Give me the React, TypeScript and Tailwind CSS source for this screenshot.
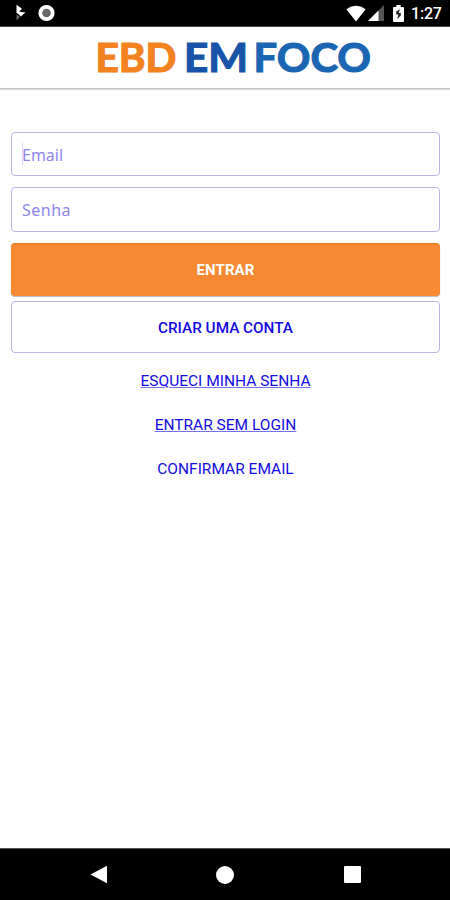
import React from "react";

const StatusBar = () => {
  return (
    <div className="flex h-[27px] shrink-0 items-center justify-between border-b border-[#444] bg-black pl-4 pr-2">
      <div className="flex items-center gap-3">
        <svg className="h-[18px] w-[10px]" viewBox="0 0 10 18">
          <path d="M0.5 0.8L6 4.8L3.2 7.5L7 8.2H9.5L5 12.5L2 9.8L0.5 9Z" fill="#fff" />
          <path d="M0.5 10.5L4 13L0.5 16.5Z" fill="#666" />
        </svg>
        <svg className="h-[18px] w-[17px]" viewBox="0 0 17 18">
          <circle cx="8.5" cy="9" r="6.2" fill="#666" stroke="#fff" strokeWidth="3.8" />
        </svg>
      </div>
      <div className="flex items-center">
        <svg className="h-[17px] w-5" viewBox="0 0 20 17">
          <path d="M0.3 4.2Q10 -2.6 19.7 4.2L10 16.5Z" fill="#fff" />
        </svg>
        <svg className="ml-[2px] h-4 w-4" viewBox="0 0 16 16">
          <path d="M0 16L16 0V16Z" fill="#555" />
          <path d="M0 16L10.5 5.5V16Z" fill="#fff" />
        </svg>
        <svg className="ml-[9px] h-[17px] w-[11px]" viewBox="0 0 11 17">
          <path d="M3.3 0H7.7V2H10Q11 2 11 3V16Q11 17 10 17H1Q0 17 0 16V3Q0 2 1 2H3.3Z" fill="#fff" />
          <path d="M7 4.2L3.2 6.5V9.5H5.4L4.2 14L7.8 10.5V8H5.6Z" fill="#222" />
        </svg>
        <span className="ml-[7px] w-[31px] whitespace-nowrap pt-[2px] text-base leading-[24px] font-medium tracking-[-0.2px] text-white">
          1:27
        </span>
      </div>
    </div>
  );
};

const Header = () => {
  return (
    <header className="flex h-[62px] shrink-0 justify-center border-b border-[#c4c4c4] bg-white shadow-[0_1px_1px_#ddd]">
      <svg
        className="h-[61px] w-full font-['Lato',sans-serif] text-[40.5px] font-bold"
        viewBox="0 0 450 61"
      >
        <text x="95.5" y="44.8" fill="#f58220" stroke="#f58220" strokeWidth="1.2" textLength="81" lengthAdjust="spacingAndGlyphs">
          EBD
        </text>
        <text x="184" y="44.8" fill="#1753a8" stroke="#1753a8" strokeWidth="1.2" textLength="64" lengthAdjust="spacingAndGlyphs">
          EM
        </text>
        <text x="253.5" y="44.8" fill="#1a66b3" stroke="#1a66b3" strokeWidth="1.2" textLength="117.5" lengthAdjust="spacingAndGlyphs">
          FOCO
        </text>
      </svg>
    </header>
  );
};

const NavigationBar = () => {
  return (
    <nav className="flex h-[52px] shrink-0 items-center justify-between border-t border-[#555] bg-black pl-[90px] pr-[89px]">
      <svg className="h-[19px] w-[18px]" viewBox="0 0 18 19">
        <path d="M0.5 9.5L17 0.8V18.2Z" fill="#fff" />
      </svg>
      <div className="mr-[2px] h-[18px] w-[18px] rounded-full bg-white" />
      <div className="h-[17px] w-[17px] rounded-[1px] bg-white" />
    </nav>
  );
};

const App = () => {
  return (
    <div className="flex h-[900px] w-[450px] flex-col bg-[#fefefe] font-['Roboto',sans-serif]">
      <StatusBar />
      <Header />
      <main className="flex flex-1 flex-col pl-[11px] pr-[10px] pt-[43px]">
        <div className="flex h-11 shrink-0 items-center rounded-[4px] border border-[#b9b5e7] bg-white pl-[10px]">
          <span className="h-[22px] w-px bg-[#dcd8f6]" />
          <input
            className="-ml-px flex-1 pt-[2px] font-['Noto_Sans',sans-serif] text-base placeholder:text-[#8f86ea] focus:outline-none"
            placeholder="Email"
          />
        </div>
        <input
          className="mt-[11px] h-[45px] shrink-0 rounded-[4px] border border-[#b9b5e7] bg-white px-[10px] font-['Noto_Sans',sans-serif] text-base tracking-[0.5px] placeholder:text-[#8f86ea] focus:outline-none"
          placeholder="Senha"
        />
        <button className="mt-[11px] h-[53px] shrink-0 rounded-[4px] border-t border-[#e2781f] bg-[#f68931] text-[15px] font-bold tracking-[0.1px] text-white shadow-[0_1px_1px_#bbb]">
          ENTRAR
        </button>
        <button className="mt-[5px] h-[52px] shrink-0 rounded-[4px] border border-[#b9b5e7] bg-white pt-[2px] text-[15.3px] font-medium text-[#1408e0]">
          CRIAR UMA CONTA
        </button>
        <div className="mt-[6px] flex flex-col items-center text-[15.5px] leading-[44px] text-[#140ce0]">
          <a className="underline decoration-[#7773eb]">ESQUECI MINHA SENHA</a>
          <a className="underline decoration-[#7773eb]">ENTRAR SEM LOGIN</a>
          <a>CONFIRMAR EMAIL</a>
        </div>
      </main>
      <NavigationBar />
    </div>
  );
};

export default App;
